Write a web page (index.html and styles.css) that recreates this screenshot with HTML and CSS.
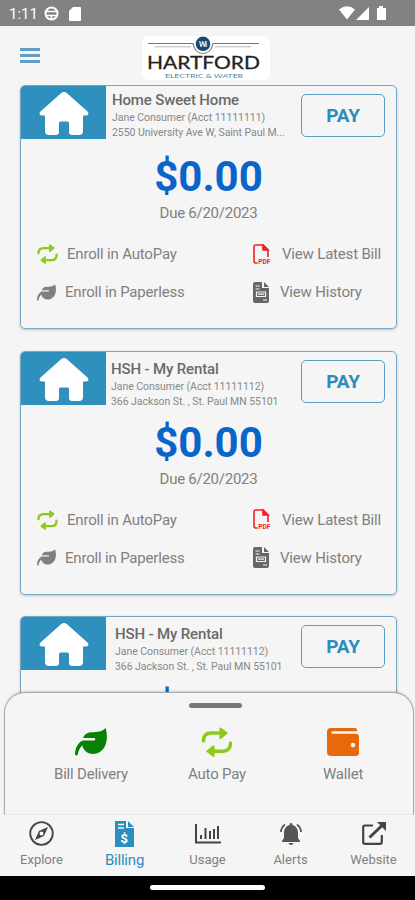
FILE: index.html
```html
<!DOCTYPE html>
<html lang="en">

<head>
    <meta charset="UTF-8">
    <meta name="viewport" content="width=device-width, initial-scale=1.0">
    <title>Billing</title>
    <link rel="stylesheet" href="styles.css">
</head>

<body>
    <!-- shared icons -->
    <svg class="hide">
        <symbol id="house" viewBox="0 0 50 43">
            <path fill="#fff" d="M22 1.2Q25 -1 28 1.2L48.5 19.5Q51 22.500 47.500 23.500H44V39Q44 43 40 43H33Q30 43 30 40V31Q30 29.500 28.500 29.500H21.500Q20 29.500 20 31V40Q20 43 17 43H10Q6 43 6 39V23.500H2.500Q-1 22.500 1.500 19.500Z" />
        </symbol>
        <symbol id="repeat" viewBox="0 0 32 31">
            <g fill="none" stroke="currentColor" stroke-width="3.600" stroke-linecap="round">
                <path d="M2 14.500C2 9 5 6.300 10 6.300H22" />
                <path d="M30 16.500C30 22 27 25 22 25H10" />
            </g>
            <path fill="currentColor" stroke="currentColor" stroke-width="2" stroke-linejoin="round" d="M19.500 1.500L26 6.300L19.500 11.500ZM12.500 19.800L6 25L12.500 30Z" />
        </symbol>
        <symbol id="leaf" viewBox="0 0 32 28">
            <path fill="currentColor" d="M30.500 0C32.500 6 32.500 14 29.500 19C26 25 20 27 14.500 25.500C10.500 24.300 8 21 7.300 17.500C4.500 20 3.300 23 2.800 26.500Q1.500 28.500 0 26.500C0 20 3 15 7.500 12.500H19.500Q21 11.200 19.500 10H8C9 6.500 12 4.500 16 4.200C23 4 27 4 30.500 0Z" />
        </symbol>
        <symbol id="pdf" viewBox="0 0 18 21">
            <g fill="none" stroke="#f02028" stroke-width="1.600">
                <path d="M4.500 19H3Q1 19 1 17V3Q1 1 3 1H10L15 6V13" />
                <path fill="#f02028" d="M10 1V6H15Z" />
            </g>
            <text class="pdf-text" x="5.300" y="20.400" textLength="12">PDF</text>
        </symbol>
        <symbol id="history" viewBox="0 0 16 21">
            <path fill="#666" d="M2 0H9V6H16V19Q16 21 14 21H2Q0 21 0 19V2Q0 0 2 0ZM11 0L16 5H11Z" />
            <path fill="none" stroke="#f5f5f5" stroke-width="1.200" d="M2.500 4H6.500M2.500 7H6.500M3.500 10H12.500V14.500H3.500ZM5 12.200H11M10 18H14" />
        </symbol>
    </svg>

    <div class="status">
        <span class="time">1:11</span>
        <svg class="globe" width="15" height="15" viewBox="0 0 15 15">
            <circle cx="7.500" cy="7.500" r="6" fill="none" stroke="#fff" stroke-width="2" />
            <path fill="none" stroke="#fff" stroke-width="1.500" d="M1 5.500H14M1 9.500H14M7.500 9V14" />
        </svg>
        <svg class="sd" width="12" height="14" viewBox="0 0 12 14">
            <path fill="#fff" d="M4 0H11Q12 0 12 1V13Q12 14 11 14H1Q0 14 0 13V4Z" />
        </svg>
        <svg class="signal" width="48" height="15" viewBox="0 0 48 15">
            <path fill="#fff" d="M0 3.500Q8 -3 16 3.500L8 13.500ZM30 1V14H17ZM40 0H44V2H47V14H38V2H40Z" />
        </svg>
    </div>

    <div class="header">
        <div class="menu"><i></i><i></i><i></i></div>
        <svg class="logo" width="128" height="44" viewBox="0 0 128 44">
            <rect width="128" height="44" rx="7" fill="#fff" />
            <g fill="none">
                <path stroke="#777" stroke-width="1.200" d="M6 7.500H51Q53 17.500 61 17.500T71 7.500H117" />
                <path stroke="#a9bcbc" d="M12.500 10.800H49M73 10.800H109" />
            </g>
            <circle cx="61" cy="7.800" r="7.300" fill="#174a72" />
            <text class="mark" x="57" y="10.500" textLength="8">Wi</text>
            <text class="name" x="5" y="33.200" textLength="113" lengthAdjust="spacingAndGlyphs">HARTFORD</text>
            <text class="tag" x="23" y="41.500" textLength="78" lengthAdjust="spacingAndGlyphs">ELECTRIC &amp; WATER</text>
        </svg>
    </div>

    <div class="main">
        <div class="card">
            <div class="top">
                <div class="pic"><svg width="50" height="43"><use href="#house" /></svg></div>
                <div class="info home">
                    <h2>Home Sweet Home</h2>
                    <p>Jane Consumer (Acct 11111111)</p>
                    <p>2550 University Ave W, Saint Paul M...</p>
                </div>
                <button>PAY</button>
            </div>
            <div class="amount">$0.00</div>
            <div class="due">Due 6/20/2023</div>
            <div class="links">
                <a><svg class="green" width="21" height="20"><use href="#repeat" /></svg>Enroll in AutoPay</a>
                <a class="bill"><svg width="18" height="21"><use href="#pdf" /></svg>View Latest Bill</a>
                <a><svg width="19" height="17"><use href="#leaf" /></svg>Enroll in Paperless</a>
                <a class="hist"><svg width="16" height="21"><use href="#history" /></svg>View History</a>
            </div>
        </div>

        <div class="card">
            <div class="top">
                <div class="pic"><svg width="50" height="43"><use href="#house" /></svg></div>
                <div class="info">
                    <h2>HSH - My Rental</h2>
                    <p>Jane Consumer (Acct 11111112)</p>
                    <p>366 Jackson St. , St. Paul MN 55101</p>
                </div>
                <button>PAY</button>
            </div>
            <div class="amount">$0.00</div>
            <div class="due">Due 6/20/2023</div>
            <div class="links">
                <a><svg class="green" width="21" height="20"><use href="#repeat" /></svg>Enroll in AutoPay</a>
                <a class="bill"><svg width="18" height="21"><use href="#pdf" /></svg>View Latest Bill</a>
                <a><svg width="19" height="17"><use href="#leaf" /></svg>Enroll in Paperless</a>
                <a class="hist"><svg width="16" height="21"><use href="#history" /></svg>View History</a>
            </div>
        </div>

        <div class="card">
            <div class="top">
                <div class="pic"><svg width="50" height="43"><use href="#house" /></svg></div>
                <div class="info last">
                    <h2>HSH - My Rental</h2>
                    <p>Jane Consumer (Acct 11111112)</p>
                    <p>366 Jackson St. , St. Paul MN 55101</p>
                </div>
                <button>PAY</button>
            </div>
            <div class="amount">$0.00</div>
        </div>

        <div class="sheet">
            <div class="handle"></div>
            <div class="actions">
                <div class="action">
                    <svg class="leaf" width="32" height="28"><use href="#leaf" /></svg>
                    <span>Bill Delivery</span>
                </div>
                <div class="action">
                    <svg class="green" width="32" height="31"><use href="#repeat" /></svg>
                    <span>Auto Pay</span>
                </div>
                <div class="action">
                    <svg width="32" height="28" viewBox="0 0 32 28">
                        <path fill="#e8690b" fill-rule="evenodd" d="M4 0H28Q30 0 30 2V3.200H5Q3.500 4.500 5 5.800H29Q32 5.800 32 9V25Q32 28 29 28H4Q0 28 0 24V4Q0 0 4 0ZM26 14.800A2.300 2.300 0 1 0 26 19.400A2.300 2.300 0 1 0 26 14.800Z" />
                    </svg>
                    <span>Wallet</span>
                </div>
            </div>
        </div>
    </div>

    <div class="nav">
        <div class="tab">
            <svg width="25" height="25" viewBox="0 0 25 25">
                <circle cx="12.500" cy="12.500" r="11.300" fill="none" stroke="#444" stroke-width="1.800" />
                <path fill="#444" fill-rule="evenodd" d="M19 6L15 15L6 19L10 10ZM12.500 10.500A2 2 0 1 0 12.500 14.500A2 2 0 1 0 12.500 10.500Z" />
            </svg>
            <span>Explore</span>
        </div>
        <div class="tab active">
            <svg width="19" height="26" viewBox="0 0 19 26">
                <path fill="#2b8fbe" d="M0 0H11V7H19V26H0ZM13 0L19 6H13Z" />
                <path stroke="#f5f5f5" stroke-width="1.500" d="M3 3.500H9M3 7H9" />
                <text class="dollar" x="5.500" y="21.500">$</text>
            </svg>
            <span>Billing</span>
        </div>
        <div class="tab">
            <svg class="chart" width="26" height="21" viewBox="0 0 26 20">
                <path fill="none" stroke="#444" stroke-width="2" d="M1 0V18.500H26M6 11V15M10.500 4V15M15 7V15M19 5V15M23 2V15" />
            </svg>
            <span>Usage</span>
        </div>
        <div class="tab">
            <svg width="22" height="22" viewBox="0 0 22 22">
                <path fill="#555" d="M11 0Q12.500 0 12.500 2C16 3 18 6 18 10V15L20 18V19H2V18L4 15V10C4 6 6 3 9.500 2Q9.500 0 11 0ZM8.500 20H13.500Q13 22 11 22T8.500 20Z" />
                <path fill="none" stroke="#555" stroke-width="1.700" d="M1 9Q1 4.500 5 1.500M21 9Q21 4.500 17 1.500" />
            </svg>
            <span>Alerts</span>
        </div>
        <div class="tab">
            <svg width="24" height="23" viewBox="0 0 24 23">
                <path fill="none" stroke="#444" stroke-width="2.200" d="M11 3.500H3Q1.200 3.500 1.200 5V20Q1.200 21.800 3 21.800H18Q19.800 21.800 19.800 20V13" />
                <path fill="none" stroke="#444" stroke-width="3" d="M7.500 15.500L20 3.500" />
                <path fill="#444" d="M15 0H24V9Z" />
            </svg>
            <span>Website</span>
        </div>
    </div>

    <div class="gesture"><div></div></div>
</body>

</html>
```
FILE: styles.css
```css
* {
    margin: 0;
    padding: 0;
    box-sizing: border-box;
}

body {
    display: flex;
    flex-direction: column;
    width: 415px;
    height: 900px;
    overflow: hidden;
    background-color: #f5f5f5;
    color: #808080;
    font-family: Roboto, "Liberation Sans", sans-serif;
}

svg {
    display: block;
    flex-shrink: 0;
}

.hide {
    display: none;
}

.status {
    display: flex;
    align-items: center;
    height: 26px;
    padding: 1px 28px 0 9px;
    background-color: #828282;
    color: #fff;
}

.time {
    width: 35px;
    font-size: 15px;
}

.sd {
    margin-left: 10px;
}

.signal {
    margin-left: auto;
}

.header {
    display: flex;
    height: 59px;
    padding: 10px 20px 0;
}

.menu {
    width: 20px;
    margin-right: 102px;
    padding-top: 12px;
}

.menu i {
    display: block;
    height: 2.5px;
    margin-bottom: 3.5px;
    background-color: #619dc5;
}

.logo text {
    font-family: Lato, sans-serif;
}

.logo .mark {
    fill: #fff;
    font-size: 7px;
    font-weight: bold;
}

.logo .name {
    fill: #222;
    font-size: 17px;
    stroke: #222;
    stroke-width: 0.3px;
}

.logo .tag {
    fill: #5185a2;
    font-size: 5.5px;
}

.main {
    position: relative;
    flex: 1;
    overflow: hidden;
    padding: 0 18px 0 20px;
}

.card {
    height: 244px;
    margin-bottom: 21.5px;
    border: 1.5px solid #76a6c6;
    border-radius: 5px;
    box-shadow: 0 1px 3px rgba(0, 0, 0, 0.2);
    overflow: hidden;
}

.top {
    display: flex;
    height: 53px;
}

.pic {
    width: 85px;
    padding: 6px 0 0 18px;
    background-color: #2f90bd;
}

.info {
    width: 195px;
    padding: 7px 0 0 5px;
    white-space: nowrap;
}

.info.home {
    padding: 4px 0 0 6px;
}

.info.last {
    padding-left: 9px;
}

.info h2 {
    font-size: 15px;
    font-weight: 500;
    line-height: 20px;
    letter-spacing: -0.15px;
    color: #6a6a6a;
}

.info p {
    font-size: 10.5px;
    line-height: 15px;
    letter-spacing: -0.05px;
    color: #888;
}

button {
    width: 84px;
    height: 43px;
    margin-top: 8px;
    border: 1px solid #5c9dc4;
    border-radius: 5px;
    background: none;
    color: #2b8dbb;
    font-family: inherit;
    font-size: 19px;
    font-weight: 700;
    letter-spacing: -0.2px;
}

.amount {
    height: 61px;
    padding-top: 12px;
    font-size: 42px;
    font-weight: 700;
    line-height: 51px;
    text-align: center;
    color: #0b64c8;
}

.due {
    margin-top: 4px;
    font-size: 15px;
    line-height: 18px;
    letter-spacing: -0.25px;
    text-align: center;
}

.links {
    display: grid;
    grid-template-columns: 216px 1fr;
    grid-template-rows: 38px 38px;
    margin-top: 13px;
    padding-left: 16px;
}

.links a {
    display: flex;
    align-items: center;
    gap: 9px;
    font-size: 15px;
    letter-spacing: -0.18px;
    white-space: nowrap;
}

.links .bill,
.links .hist {
    gap: 11px;
}

.pdf-text {
    fill: #f02028;
    font-size: 6.5px;
    font-weight: bold;
    letter-spacing: 0;
}

.green {
    color: #8ec919;
}

.sheet {
    position: absolute;
    left: 4px;
    right: 1px;
    bottom: 0;
    height: 123px;
    padding-top: 10px;
    border: 1.5px solid #aaa;
    border-bottom: 1px solid #e8e8e8;
    border-radius: 21px 21px 0 0;
    background-color: #f5f5f5;
    box-shadow: 0 -1px 2px rgba(0, 0, 0, 0.15);
}

.handle {
    width: 53px;
    height: 5px;
    margin-left: 184px;
    border-radius: 3px;
    background-color: #787878;
}

.actions {
    display: flex;
    padding: 17px 7px 0 23px;
}

.action {
    display: flex;
    flex-direction: column;
    align-items: center;
    flex: 1;
}

.action svg {
    height: 34px;
    padding: 2px 0;
}

.action span {
    margin-top: 5px;
    font-size: 15px;
    line-height: 20px;
    letter-spacing: -0.2px;
}

.leaf {
    color: #068306;
}

.nav {
    display: flex;
    height: 61px;
}

.tab {
    display: flex;
    flex-direction: column;
    align-items: center;
    width: 83px;
}

.tab svg {
    margin: auto 0;
}

.tab .chart {
    padding-top: 1px;
}

.tab span {
    height: 24px;
    font-size: 13px;
    line-height: 16px;
}

.active {
    color: #2b8fbe;
}

.tab.active span {
    font-size: 15px;
    letter-spacing: -0.2px;
}

.dollar {
    fill: #fff;
    font-size: 13px;
    font-weight: bold;
}

.gesture {
    height: 24px;
    padding-top: 9px;
    background-color: #000;
}

.gesture div {
    width: 115px;
    height: 5px;
    margin: 0 auto;
    border-radius: 3px;
    background-color: #fff;
}
```
